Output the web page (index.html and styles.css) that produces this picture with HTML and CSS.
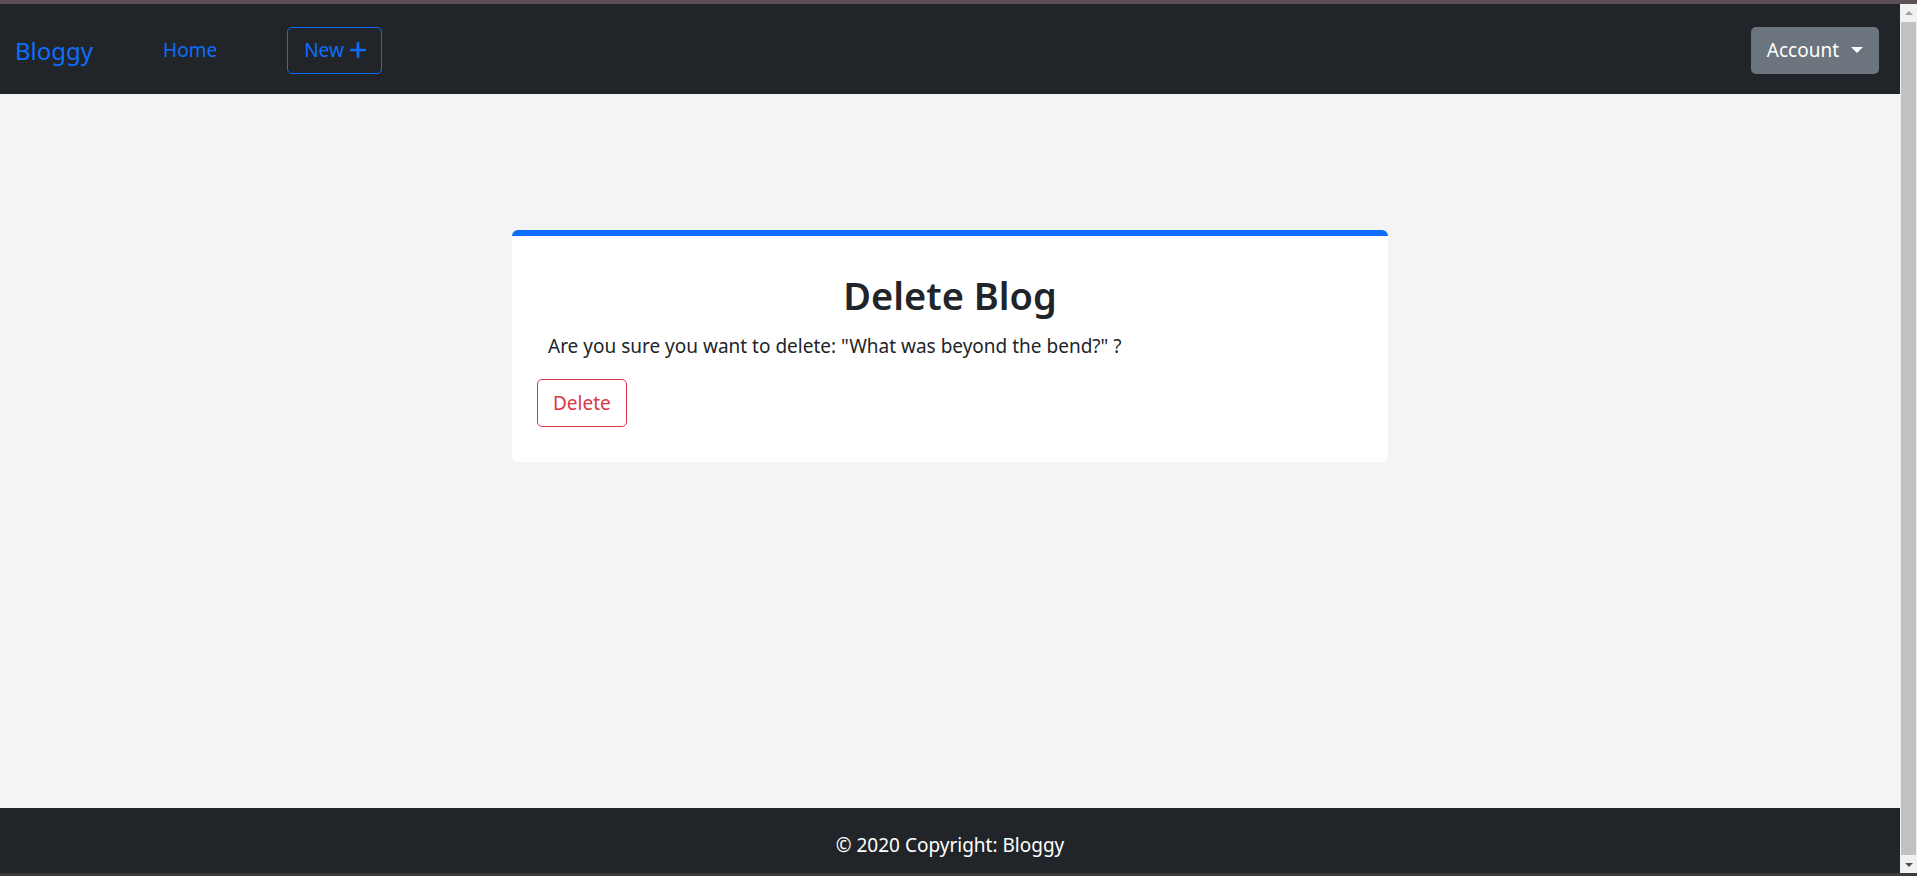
FILE: index.html
```html
<!DOCTYPE html>
<html lang="en">
<head>
<meta charset="utf-8">
<title>Bloggy - Delete Blog</title>
<link rel="stylesheet" href="styles.css">
</head>
<body>
<div class="topstrip"></div>
<div class="frame">
  <div class="page">
    <nav class="navbar">
      <a class="brand" href="#">Bloggy</a>
      <a class="nav-link" href="#">Home</a>
      <a class="btn-new" href="#">New
        <svg class="plus" viewBox="0 0 16 16" width="18" height="18"><path d="M8 2v12M2 8h12" stroke="currentColor" stroke-width="2.4" stroke-linecap="round" fill="none"/></svg>
      </a>
      <div class="spacer"></div>
      <button class="btn-account">Account <span class="caret"></span></button>
    </nav>
    <main class="main">
      <section class="card">
        <h2 class="card-title">Delete Blog</h2>
        <p class="card-text">Are you sure you want to delete: "What was beyond the bend?" ?</p>
        <button class="btn-delete">Delete</button>
      </section>
    </main>
    <footer class="footer">© 2020 Copyright: Bloggy</footer>
  </div>
  <div class="scrollbar">
    <div class="sb-arrow up"></div>
    <div class="sb-thumb"></div>
    <div class="sb-arrow down"></div>
  </div>
</div>
<div class="bottomline"></div>
</body>
</html>
```

FILE: styles.css
```css
* { box-sizing: border-box; }
html, body { margin: 0; padding: 0; height: 100%; }
body {
  font-family: "Noto Sans", "Open Sans", sans-serif;
  font-size: 19px;
  color: #212529;
  background: #f4f4f4;
  display: flex;
  flex-direction: column;
  overflow: hidden;
}
.topstrip { height: 4px; background: #5d4f58; flex: none; }
.bottomline { height: 3px; background: #3c3c3c; flex: none; }
.frame { flex: 1; display: flex; min-height: 0; }
.page { flex: 1; display: flex; flex-direction: column; min-width: 0; }

.navbar {
  height: 90px;
  background: #212529;
  display: flex;
  align-items: center;
  padding: 2px 21px 0 15px;
  flex: none;
}
.brand {
  color: #0d6efd;
  text-decoration: none;
  font-size: 24px;
  margin-right: 70px;
}
.nav-link {
  color: #0d6efd;
  text-decoration: none;
  font-size: 19px;
  margin-right: 70px;
}
.btn-new {
  display: flex;
  align-items: center;
  gap: 5px;
  height: 47px;
  padding: 0 14px 0 16px;
  border: 1px solid #0d6efd;
  border-radius: 5px;
  color: #0d6efd;
  text-decoration: none;
  font-size: 19px;
}
.plus { display: block; }
.spacer { flex: 1; }
.btn-account {
  display: flex;
  align-items: center;
  gap: 12px;
  height: 47px;
  padding: 0 16px;
  background: #6c757d;
  border: 0;
  border-radius: 5px;
  color: #fff;
  font-family: inherit;
  font-size: 19px;
}
.caret {
  width: 0; height: 0;
  border-left: 6px solid transparent;
  border-right: 6px solid transparent;
  border-top: 6px solid #fff;
}

.main {
  flex: 1;
  display: flex;
  justify-content: center;
  align-items: flex-start;
  padding-top: 136px;
}
.card {
  width: 876px;
  background: #fff;
  border-top: 6px solid #0d6efd;
  border-radius: 6px;
  padding: 37px 25px 35px;
}
.card-title {
  margin: 0 0 13px;
  text-align: center;
  font-size: 38px;
  font-weight: 600;
  line-height: 1.2;
}
.card-text {
  margin: 0 0 19px 11px;
  line-height: 1.5;
}
.btn-delete {
  height: 48px;
  padding: 0 15px;
  background: #fff;
  color: #dc3545;
  border: 1px solid #dc3545;
  border-radius: 5px;
  font-family: inherit;
  font-size: 19px;
}

.footer {
  height: 65px;
  flex: none;
  background: #212529;
  color: #fff;
  display: flex;
  align-items: center;
  justify-content: center;
  padding-top: 8px;
}

.scrollbar {
  width: 17px;
  flex: none;
  background: #f1f1f1;
  display: flex;
  flex-direction: column;
  align-items: center;
}
.sb-arrow { height: 17px; width: 100%; display: flex; align-items: center; justify-content: center; flex: none; }
.sb-arrow::before {
  content: "";
  width: 0; height: 0;
  border-left: 4px solid transparent;
  border-right: 4px solid transparent;
}
.sb-arrow.up::before { border-bottom: 4px solid #a3a3a3; }
.sb-arrow.down::before { border-top: 4px solid #505050; }
.sb-thumb { flex: 1; width: 15px; background: #c1c1c1; margin: 1px 0; }
```
